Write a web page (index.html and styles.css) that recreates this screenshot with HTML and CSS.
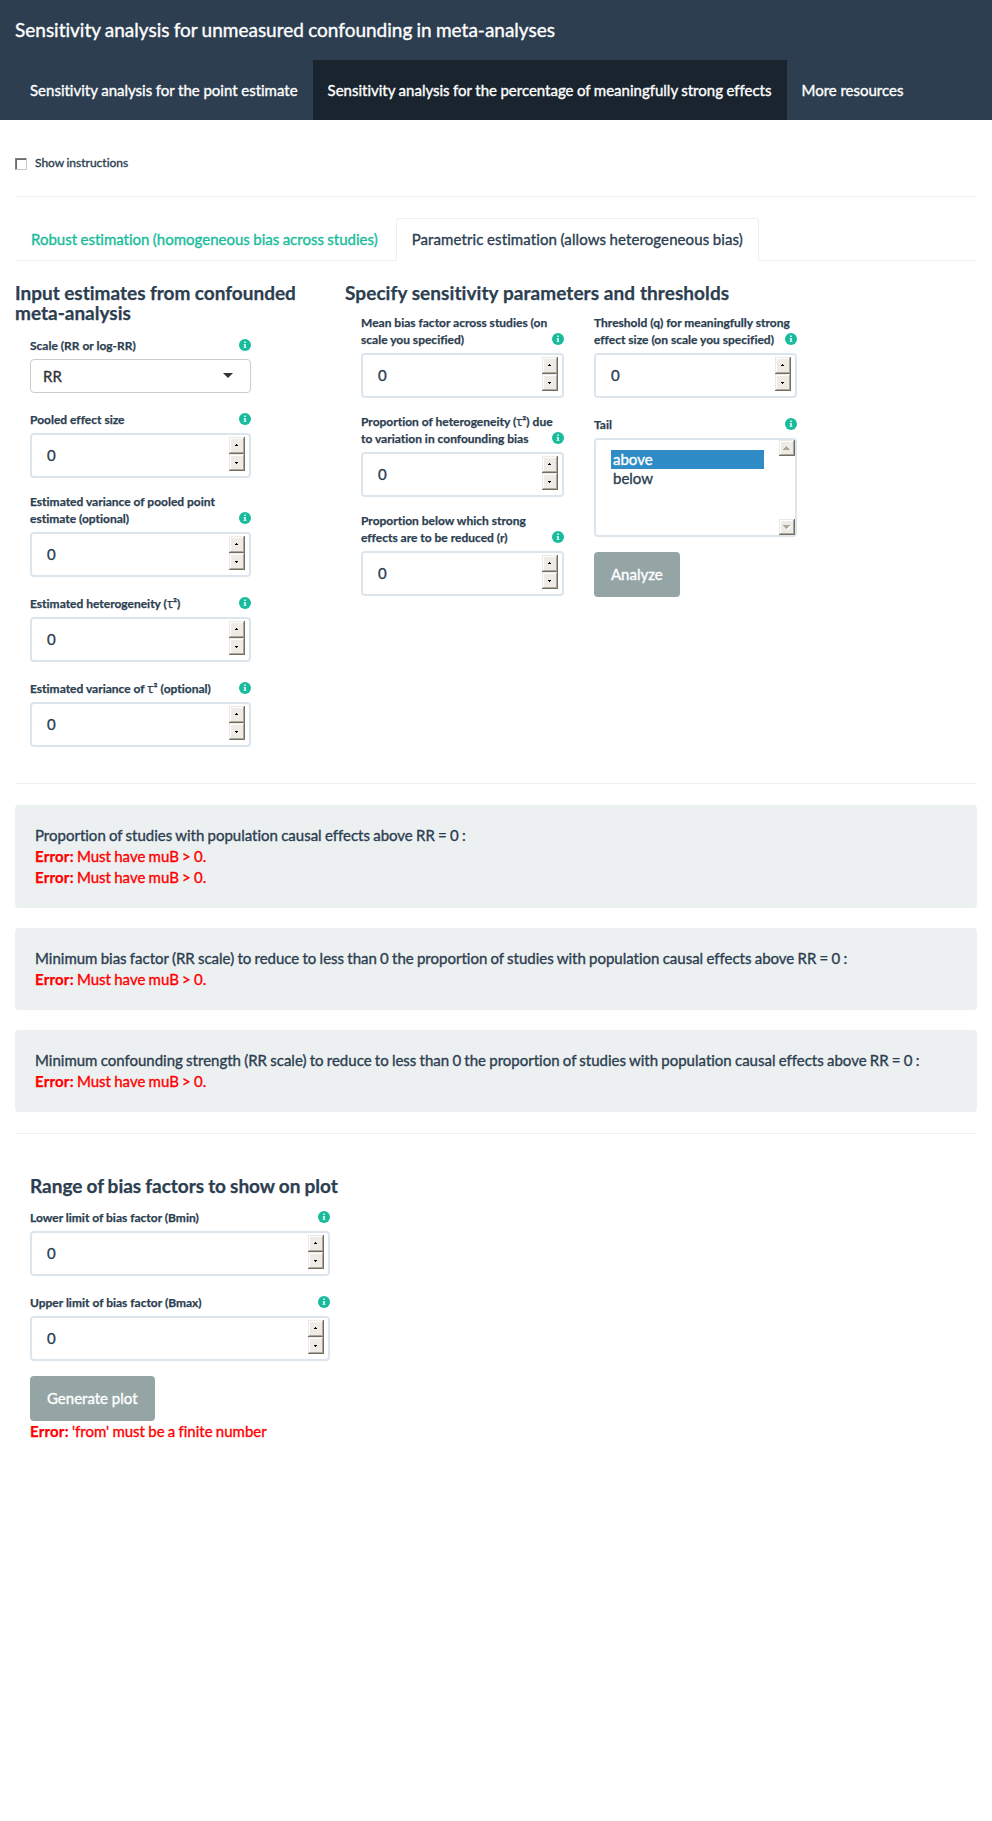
FILE: index.html
```
<!DOCTYPE html>
<html lang="en">
<head>
<meta charset="utf-8">
<title>Sensitivity analysis for unmeasured confounding in meta-analyses</title>
<link rel="stylesheet" href="styles.css">
</head>
<body>
<svg width="0" height="0" class="defs">
  <symbol id="info" viewBox="0 0 12 12"><circle cx="6" cy="6" r="6" fill="#18bc9c"/><path d="M5 2.5h2v1.5H5zM4.7 4.9H7v3.2h.4v1H4.6v-1H5V5.9h-.3z" fill="#fff" fill-opacity=".75"/></symbol>
  <symbol id="spin" viewBox="0 0 16 34">
    <g id="btn"><path d="M0 0h16v17H0z" fill="#716f64"/><path d="M0 0h15v16H0z" fill="#ece9e4"/><path d="M1 1h14v15H1z" fill="#aca899"/><path d="M1 1h13v14H1z" fill="#fff"/><path d="M2 2h12v13H2z" fill="#eeebe6"/></g>
    <use href="#btn" y="17"/>
    <path d="M7 7h1v1h1v1H6V8h1zM6 25h3v1H8v1H7v-1H6z" fill="#000"/>
  </symbol>
</svg>
<header class="navbar">
  <div class="brand">Sensitivity analysis for unmeasured confounding in meta-analyses</div>
  <nav class="nav">
    <a>Sensitivity analysis for the point estimate</a>
    <a class="active">Sensitivity analysis for the percentage of meaningfully strong effects</a>
    <a>More resources</a>
  </nav>
</header>
<main class="page">
  <div class="check"><span class="box"></span><span>Show instructions</span></div>
  <div class="tabs">
    <a class="tab">Robust estimation (homogeneous bias across studies)</a>
    <a class="tab current">Parametric estimation (allows heterogeneous bias)</a>
  </div>
  <section class="forms">
    <div class="left">
      <h4>Input estimates from confounded meta-analysis</h4>
      <div class="fields">
        <div class="label"><span>Scale (RR or log-RR)</span><svg class="info"><use href="#info"/></svg></div>
        <div class="select"><span>RR</span><i class="caret"></i></div>
        <div class="label"><span>Pooled effect size</span><svg class="info"><use href="#info"/></svg></div>
        <div class="input"><span>0</span><svg class="spin"><use href="#spin"/></svg></div>
        <div class="label"><span>Estimated variance of pooled point<br>estimate (optional)</span><svg class="info"><use href="#info"/></svg></div>
        <div class="input"><span>0</span><svg class="spin"><use href="#spin"/></svg></div>
        <div class="label"><span>Estimated heterogeneity (<i class="tau">τ</i>²)</span><svg class="info"><use href="#info"/></svg></div>
        <div class="input"><span>0</span><svg class="spin"><use href="#spin"/></svg></div>
        <div class="label"><span>Estimated variance of <i class="tau">τ</i>² (optional)</span><svg class="info"><use href="#info"/></svg></div>
        <div class="input"><span>0</span><svg class="spin"><use href="#spin"/></svg></div>
      </div>
    </div>
    <div class="right">
      <h4>Specify sensitivity parameters and thresholds</h4>
      <div class="cols">
        <div class="fields">
          <div class="label"><span>Mean bias factor across studies (on<br>scale you specified)</span><svg class="info"><use href="#info"/></svg></div>
          <div class="input"><span>0</span><svg class="spin"><use href="#spin"/></svg></div>
          <div class="label"><span>Proportion of heterogeneity (<i class="tau">τ</i>²) due<br>to variation in confounding bias</span><svg class="info"><use href="#info"/></svg></div>
          <div class="input"><span>0</span><svg class="spin"><use href="#spin"/></svg></div>
          <div class="label"><span>Proportion below which strong<br>effects are to be reduced (r)</span><svg class="info"><use href="#info"/></svg></div>
          <div class="input"><span>0</span><svg class="spin"><use href="#spin"/></svg></div>
        </div>
        <div class="fields">
          <div class="label"><span>Threshold (q) for meaningfully strong<br>effect size (on scale you specified)</span><svg class="info"><use href="#info"/></svg></div>
          <div class="input"><span>0</span><svg class="spin"><use href="#spin"/></svg></div>
          <div class="label"><span>Tail</span><svg class="info"><use href="#info"/></svg></div>
          <div class="listbox">
            <div class="options"><div class="option picked">above</div><div class="option">below</div></div>
            <div class="scroll">
              <svg width="16" height="16"><path d="M0 0h16v16H0z" fill="#716f64"/><path d="M0 0h15v15H0z" fill="#ece9e4"/><path d="M1 1h14v14H1z" fill="#aca899"/><path d="M1 1h13v13H1z" fill="#fff"/><path d="M2 2h12v12H2z" fill="#eeebe6"/><path d="M8 6h1v1h1v1h1v1h1v1H5z" fill="#fff"/><path d="M7 6h1v1h1v1h1v1h1v1H4V9h1V8h1V7h1z" fill="#aca899"/></svg>
              <svg width="16" height="16"><path d="M0 0h16v16H0z" fill="#716f64"/><path d="M0 0h15v15H0z" fill="#ece9e4"/><path d="M1 1h14v14H1z" fill="#aca899"/><path d="M1 1h13v13H1z" fill="#fff"/><path d="M2 2h12v12H2z" fill="#eeebe6"/><path d="M5 7h7v1h-1v1h-1v1H9v1H8z" fill="#fff"/><path d="M4 6h7v1h-1v1H9v1H8v1H7V9H6V8H5V7H4z" fill="#aca899"/></svg>
            </div>
          </div>
          <button class="btn">Analyze</button>
        </div>
      </div>
    </div>
  </section>
  <section class="results">
    <div class="well"><div>Proportion of studies with population causal effects above RR = 0 :</div><div class="error"><b>Error:</b> Must have muB &gt; 0.</div><div class="error"><b>Error:</b> Must have muB &gt; 0.</div></div>
    <div class="well"><div>Minimum bias factor (RR scale) to reduce to less than 0 the proportion of studies with population causal effects above RR = 0 :</div><div class="error"><b>Error:</b> Must have muB &gt; 0.</div></div>
    <div class="well"><div>Minimum confounding strength (RR scale) to reduce to less than 0 the proportion of studies with population causal effects above RR = 0 :</div><div class="error"><b>Error:</b> Must have muB &gt; 0.</div></div>
  </section>
  <section class="plot">
    <h4>Range of bias factors to show on plot</h4>
    <div class="fields">
      <div class="label"><span>Lower limit of bias factor (Bmin)</span><svg class="info"><use href="#info"/></svg></div>
      <div class="input"><span>0</span><svg class="spin"><use href="#spin"/></svg></div>
      <div class="label"><span>Upper limit of bias factor (Bmax)</span><svg class="info"><use href="#info"/></svg></div>
      <div class="input"><span>0</span><svg class="spin"><use href="#spin"/></svg></div>
      <button class="btn">Generate plot</button>
      <div class="error"><b>Error:</b> 'from' must be a finite number</div>
    </div>
  </section>
</main>
</body>
</html>
```
FILE: styles.css
```
* { box-sizing: border-box; }
body { margin: 0; min-height: 1821px; background: #fff; color: #2c3e50; font: 15px/21px Lato, sans-serif; font-variant-ligatures: none; word-spacing: -0.6px; -webkit-text-stroke: 0.35px; }
b, h4, .label { -webkit-text-stroke: 0.25px; }
b { letter-spacing: 0.2px; }
.defs { display: block; position: absolute; }
.navbar { height: 120px; background: #2c3e50; color: #fff; }
.brand { height: 60px; padding: 0 15px; font-size: 19px; line-height: 60px; white-space: nowrap; }
.nav { display: flex; padding-left: 15px; word-spacing: -0.2px; }
.nav a { height: 60px; padding: 0 15px; line-height: 61px; white-space: nowrap; }
.nav .active { background: #1a242f; word-spacing: -0.35px; }
.page { padding: 0 15px; }
.check { display: flex; align-items: center; height: 77px; padding-top: 8px; gap: 8px; border-bottom: 1px solid #ecf0f1; font-size: 12px; }
.box { width: 12px; height: 12px; margin-top: 3px; border: 1px solid; border-color: #808080 #c8c8c8 #c8c8c8 #808080; box-shadow: inset 1px 1px #6b6b6b; }
.tabs { display: flex; gap: 2px; margin-top: 21px; border-bottom: 1px solid #ecf0f1; }
.tab { height: 43px; margin-bottom: -1px; padding: 10px 15px; border: 1px solid transparent; color: #18bc9c; white-space: nowrap; word-spacing: -0.4px; }
.current { border-color: #ecf0f1 #ecf0f1 #fff; border-radius: 4px 4px 0 0; background: #fff; color: #2c3e50; letter-spacing: 0.1px; }
.forms { display: flex; height: 523px; border-bottom: 1px solid #ecf0f1; }
.left { width: 330px; }
h4 { margin: 0; font-size: 19px; line-height: 20px; font-weight: 700; white-space: nowrap; }
.left h4 { width: 300px; margin: 22px 0 10px; white-space: normal; word-spacing: -0.2px; }
.left .fields { width: 221px; margin-left: 15px; padding-top: 1px; }
.right h4 { margin: 22px 0 11px; word-spacing: 0; letter-spacing: 0.07px; }
.right .cols { display: flex; gap: 30px; padding-left: 16px; }
.right .fields { width: 203px; }
.label { display: flex; justify-content: space-between; align-items: flex-end; min-height: 25px; padding-bottom: 5px; font-size: 12px; line-height: 17px; font-weight: 700; white-space: nowrap; word-spacing: 0; }
.label span { width: 0; }
.tau { font: 400 13px/1 "Open Sans", sans-serif; }
.info { flex: none; width: 12px; height: 12px; margin-bottom: 3px; }
.input { display: flex; justify-content: space-between; height: 45px; margin-bottom: 15px; padding: 2px 4px 0 15px; border: 2px solid #dce4ec; border-radius: 4px; line-height: 37px; }
.spin { width: 16px; height: 34px; }
.select { display: flex; justify-content: space-between; align-items: center; height: 34px; margin-bottom: 15px; padding: 0 17px 0 12px; border: 1px solid #ccc; border-radius: 4px; color: #333; }
.caret { border: 5px solid transparent; border-top-color: #333; border-bottom: 0; margin-top: -2px; }
.listbox { display: flex; justify-content: space-between; height: 99px; margin-bottom: 15px; border: 2px solid #dce4ec; border-radius: 4px; }
.options { width: 153px; margin: 10px 0 0 15px; }
.option { height: 19px; padding-left: 2px; line-height: 19px; }
.picked { background: #308cc6; color: #fff; }
.scroll { display: flex; flex-direction: column; justify-content: space-between; }
.btn { display: block; height: 45px; padding: 0 17px; border: 0; border-radius: 4px; background: #95a5a6; color: #fff; font: inherit; }
.results { display: flex; flex-direction: column; gap: 20px; padding: 21px 0; border-bottom: 1px solid #ecf0f1; }
.well { padding: 20px; border-radius: 4px; background: #ecf0f1; white-space: nowrap; }
.error { color: #f00; }
.plot { padding: 42px 15px 0; }
.plot .fields { width: 300px; padding-top: 10px; }
```
